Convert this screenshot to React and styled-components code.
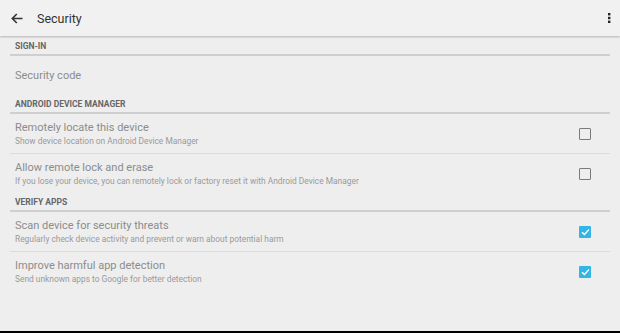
import React, { useState } from "react";
import styled, { createGlobalStyle } from "styled-components";

const GlobalStyle = createGlobalStyle`
  html, body {
    margin: 0;
    padding: 0;
    height: 100%;
    background: #eeeeee;
  }
  #root {
    height: 100%;
  }
`;

const Screen = styled.div`
  height: 100vh;
  display: flex;
  flex-direction: column;
  background: #eeeeee;
  font-family: Roboto, "Liberation Sans", sans-serif;
  overflow: hidden;
`;

const Toolbar = styled.div`
  height: 36px;
  flex-shrink: 0;
  display: flex;
  align-items: center;
  background: #f1f1f1;
  box-shadow: 0 1px 2px rgba(0, 0, 0, 0.25);
  position: relative;
  z-index: 1;
`;

const IconButton = styled.div`
  width: ${(p) => p.w}px;
  height: 36px;
  display: flex;
  align-items: center;
  justify-content: center;
`;

const ToolbarTitle = styled.div`
  flex: 1;
  font-size: 12.5px;
  color: #333333;
  margin-left: 3px;
`;

const List = styled.div`
  flex: 1;
  padding: 2px 10px 0 10px;
`;

const Header = styled.div`
  height: 16px;
  padding: 0 5px;
  display: flex;
  align-items: center;
  font-size: 8.5px;
  font-weight: bold;
  color: #666666;
  border-bottom: 2px solid #cfcfcf;
`;

const Item = styled.div`
  height: ${(p) => (p.$last ? 40 : 39)}px;
  display: flex;
  align-items: center;
  padding: 0 19px 0 5px;
  border-bottom: ${(p) => (p.$last ? "none" : "1px solid #dcdcdc")};
`;

const ItemText = styled.div`
  flex: 1;
  display: flex;
  flex-direction: column;
`;

const ItemTitle = styled.div`
  font-size: 11px;
  line-height: 14px;
  color: #8c8c8c;
`;

const ItemSummary = styled.div`
  font-size: 8.4px;
  line-height: 12px;
  color: #9a9a9a;
`;

const Check = styled.div`
  width: ${(p) => (p.$on ? 12 : 10)}px;
  height: ${(p) => (p.$on ? 12 : 10)}px;
  border: ${(p) => (p.$on ? "none" : "1.5px solid #7a7a7a")};
  background: ${(p) => (p.$on ? "#33b5e5" : "transparent")};
  border-radius: 1px;
  display: flex;
  align-items: center;
  justify-content: center;
`;

const BottomBar = styled.div`
  height: 2px;
  flex-shrink: 0;
  background: #000000;
`;

function Checkbox({ on }) {
  return (
    <Check $on={on}>
      {on && (
        <svg width="9" height="8" viewBox="0 0 9 8">
          <path d="M1 4.2 L3.4 6.4 L8 1.6" fill="none" stroke="#ffffff" strokeWidth="1.4" />
        </svg>
      )}
    </Check>
  );
}

const sections = [
  {
    title: "SIGN-IN",
    items: [{ title: "Security code" }],
  },
  {
    title: "ANDROID DEVICE MANAGER",
    items: [
      { title: "Remotely locate this device", summary: "Show device location on Android Device Manager", checked: false },
      {
        title: "Allow remote lock and erase",
        summary: "If you lose your device, you can remotely lock or factory reset it with Android Device Manager",
        checked: false,
      },
    ],
  },
  {
    title: "VERIFY APPS",
    items: [
      {
        title: "Scan device for security threats",
        summary: "Regularly check device activity and prevent or warn about potential harm",
        checked: true,
      },
      { title: "Improve harmful app detection", summary: "Send unknown apps to Google for better detection", checked: true },
    ],
  },
];

export default function App() {
  const [data] = useState(sections);

  return (
    <Screen>
      <GlobalStyle />
      <Toolbar>
        <IconButton w={34}>
          <svg width="12" height="11" viewBox="0 0 12 11">
            <path d="M11.5 5.5 H1.5 M5.8 1 L1.3 5.5 L5.8 10" fill="none" stroke="#333" strokeWidth="1.6" />
          </svg>
        </IconButton>
        <ToolbarTitle>Security</ToolbarTitle>
        <IconButton w={22}>
          <svg width="3" height="10" viewBox="0 0 3 10">
            <rect x="0" y="0" width="2.4" height="2.4" fill="#222" />
            <rect x="0" y="3.8" width="2.4" height="2.4" fill="#222" />
            <rect x="0" y="7.6" width="2.4" height="2.4" fill="#222" />
          </svg>
        </IconButton>
      </Toolbar>
      <List>
        {data.map((section) => (
          <div key={section.title}>
            <Header>{section.title}</Header>
            {section.items.map((item, i) => (
              <Item key={item.title} $last={i === section.items.length - 1}>
                <ItemText>
                  <ItemTitle>{item.title}</ItemTitle>
                  {item.summary && <ItemSummary>{item.summary}</ItemSummary>}
                </ItemText>
                {item.checked !== undefined && <Checkbox on={item.checked} />}
              </Item>
            ))}
          </div>
        ))}
      </List>
      <BottomBar />
    </Screen>
  );
}
